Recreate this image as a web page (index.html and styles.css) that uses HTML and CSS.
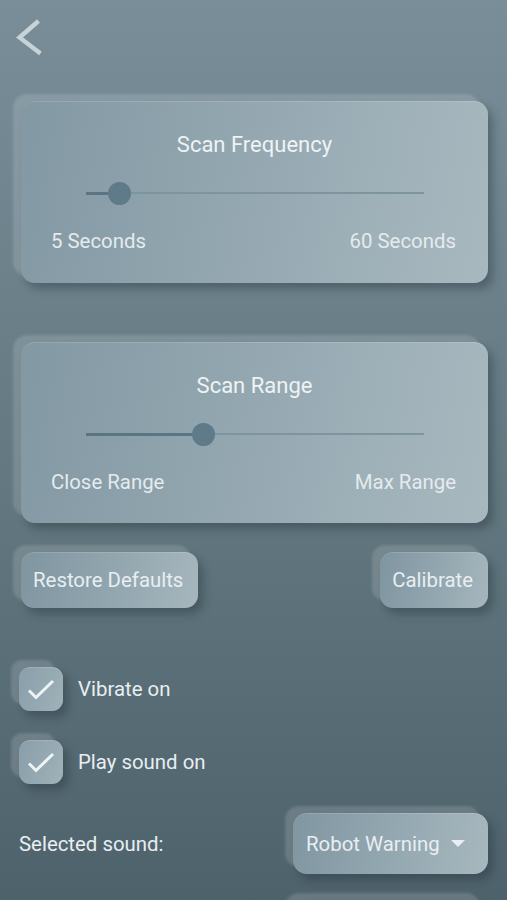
FILE: index.html
```html
<!DOCTYPE html>
<html lang="en">
<head>
  <meta charset="UTF-8">
  <meta name="viewport" content="width=device-width, initial-scale=1.0">
  <title>Settings</title>
  <link rel="stylesheet" href="styles.css">
</head>
<body>
  <div class="topbar">
    <svg class="back" width="30" height="40" viewBox="0 0 30 40">
      <path d="M24.5 3 L5.5 19.5 L26.5 35.5" fill="none" stroke="#c6d3d9" stroke-width="4.4"/>
    </svg>
  </div>

  <div class="page">
    <div class="panel raised">
      <div class="panel-title">Scan Frequency</div>
      <div class="slider">
        <div class="fill" style="width: 6.4%"></div>
        <div class="thumb"></div>
        <div class="rest"></div>
      </div>
      <div class="ends">
        <span>5 Seconds</span>
        <span>60 Seconds</span>
      </div>
    </div>

    <div class="panel raised second">
      <div class="panel-title">Scan Range</div>
      <div class="slider">
        <div class="fill" style="width: 31.4%"></div>
        <div class="thumb"></div>
        <div class="rest"></div>
      </div>
      <div class="ends">
        <span>Close Range</span>
        <span>Max Range</span>
      </div>
    </div>

    <div class="actions">
      <div class="btn raised">Restore Defaults</div>
      <div class="btn raised">Calibrate</div>
    </div>

    <div class="check-row first">
      <div class="check raised">
        <svg width="44" height="44" viewBox="0 0 44 44">
          <path d="M10 23.5 L17 30.5 L34 14" fill="none" stroke="#eef3f5" stroke-width="3"/>
        </svg>
      </div>
      <span>Vibrate on</span>
    </div>

    <div class="check-row">
      <div class="check raised">
        <svg width="44" height="44" viewBox="0 0 44 44">
          <path d="M10 23.5 L17 30.5 L34 14" fill="none" stroke="#eef3f5" stroke-width="3"/>
        </svg>
      </div>
      <span>Play sound on</span>
    </div>

    <div class="sound-row">
      <span class="sound-label">Selected sound:</span>
      <div class="select raised">
        <span>Robot Warning</span>
        <span class="caret"></span>
      </div>
    </div>

    <div class="sound-row">
      <span></span>
      <div class="select raised"></div>
    </div>
  </div>
</body>
</html>
```

FILE: styles.css
```css
*{
  margin: 0;
  padding: 0;
  box-sizing: border-box;
}
html, body{
  height: 100%;
}
body{
  font-family: Roboto, "Liberation Sans", sans-serif;
  color: #e8eef1;
  background: linear-gradient(180deg, #798e99 0%, #62777f 55%, #4e626c 100%);
  overflow: hidden;
}
.topbar{
  height: 101px;
  padding: 18px 0 0 14px;
}
.back{
  display: block;
}
.page{
  padding: 0 19px 0 21px;
}
.raised{
  box-shadow: -8px -7px 3px rgba(255, 255, 255, 0.15),
              5px 6px 8px rgba(28, 42, 52, 0.35),
              inset 0 1px 0 rgba(255, 255, 255, 0.14);
}
.panel{
  height: 182px;
  border-radius: 14px;
  padding-top: 32px;
  background: linear-gradient(100deg, #8298a3 0%, #97aab3 55%, #a8b8bf 100%);
}
.panel.second{
  margin-top: 59px;
  height: 181px;
}
.panel-title{
  text-align: center;
  font-size: 22px;
  line-height: 24px;
  color: #eef3f5;
}
.slider{
  display: flex;
  align-items: center;
  height: 24px;
  margin: 24px 64px 0 65px;
}
.fill{
  height: 3px;
  background-color: #5b7583;
}
.thumb{
  width: 23px;
  height: 23px;
  border-radius: 50%;
  background-color: #5f7a88;
  flex-shrink: 0;
}
.rest{
  flex: 1;
  height: 2px;
  background-color: #7d95a1;
}
.ends{
  display: flex;
  justify-content: space-between;
  margin-top: 24px;
  padding: 0 32px 0 30px;
  font-size: 20.4px;
  line-height: 24px;
  color: #e4ebee;
}
.actions{
  display: flex;
  justify-content: space-between;
  margin-top: 29px;
}
.btn{
  height: 56px;
  line-height: 56px;
  padding: 0 15px 0 12px;
  border-radius: 13px;
  font-size: 20.4px;
  background: linear-gradient(100deg, #7f95a0 0%, #93a7b0 55%, #a6b6bd 100%);
}
.check-row{
  display: flex;
  align-items: center;
  gap: 15px;
  margin-top: 29px;
  margin-left: -2px;
  font-size: 20.4px;
}
.check-row.first{
  margin-top: 59px;
}
.check{
  width: 44px;
  height: 44px;
  border-radius: 11px;
  background: linear-gradient(110deg, #889eaa 0%, #a0b2b9 100%);
}
.check svg{
  display: block;
}
.sound-row{
  display: flex;
  justify-content: space-between;
  align-items: center;
  margin-top: 29px;
  margin-left: -2px;
  font-size: 20.4px;
}
.sound-row + .sound-row{
  margin-top: 26px;
}
.select{
  display: flex;
  align-items: center;
  width: 195px;
  height: 61px;
  padding-left: 13px;
  border-radius: 14px;
  background: linear-gradient(100deg, #8096a1 0%, #95a9b2 55%, #a7b7be 100%);
}
.caret{
  width: 0;
  height: 0;
  margin-left: 11px;
  border-left: 7px solid transparent;
  border-right: 7px solid transparent;
  border-top: 7px solid #e8eef1;
}
```
